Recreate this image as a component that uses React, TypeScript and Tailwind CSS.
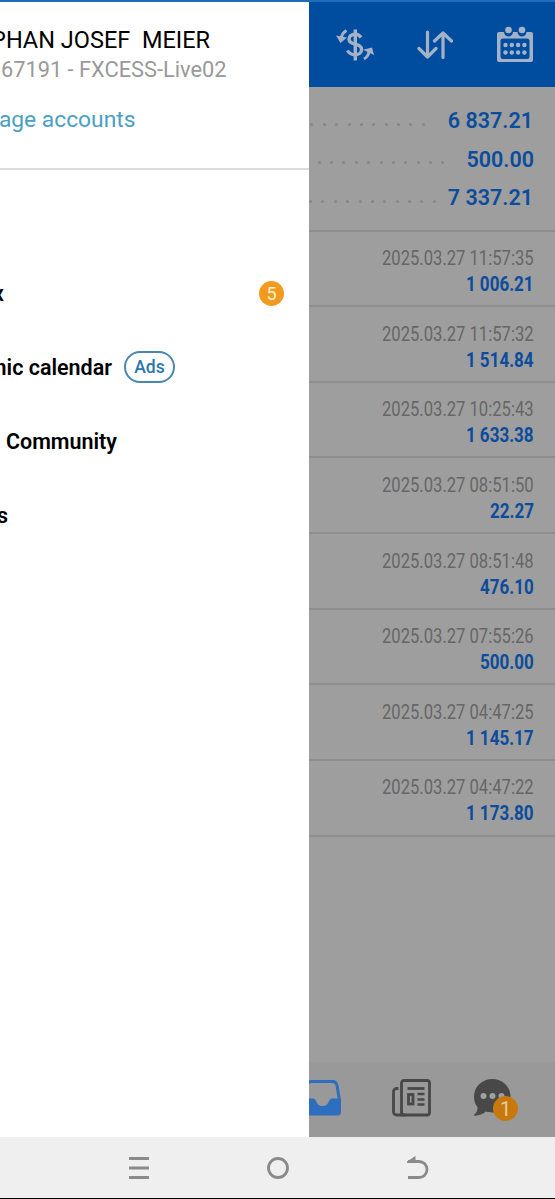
import clsx from "clsx";

const summary = [
  { value: "6 837.21", dots: 10, gap: "mr-[23px]", nudge: "mr-px" },
  { value: "500.00", dots: 11, gap: "mr-[22px]", nudge: "" },
  { value: "7 337.21", dots: 11, gap: "mr-[12px]", nudge: "mr-px" },
];

const history = [
  { time: "2025.03.27 11:57:35", amount: "1 006.21" },
  { time: "2025.03.27 11:57:32", amount: "1 514.84" },
  { time: "2025.03.27 10:25:43", amount: "1 633.38" },
  { time: "2025.03.27 08:51:50", amount: "22.27" },
  { time: "2025.03.27 08:51:48", amount: "476.10" },
  { time: "2025.03.27 07:55:26", amount: "500.00" },
  { time: "2025.03.27 04:47:25", amount: "1 145.17" },
  { time: "2025.03.27 04:47:22", amount: "1 173.80" },
];

function CurrencyIcon() {
  return (
    <svg width="38" height="34" viewBox="0 0 38 34" fill="none" stroke="#a3b2c6" strokeWidth="3.400">
      <path d="M25 9.500C23.500 7.300 22 6.300 19.300 6.300c-4 0-6.300 2-6.300 4.900 0 6.800 12.600 3.200 12.600 10.300 0 3.200-2.600 5.200-6.300 5.200-3.600 0-6.300-1.400-7.900-4.200" />
      <path d="M19.300 1.500v31" />
      <path d="M10.500 2.500C7 4.500 5.300 7.500 5.200 11" strokeWidth="3" />
      <path d="M0 7.500 4.500 15 11 9.500z" fill="#a3b2c6" stroke="none" />
      <path d="M28 31c3.400-2 4.800-4.200 5-8" strokeWidth="3" />
      <path d="M27 21.800 38 27 36 19.500z" fill="#a3b2c6" stroke="none" />
    </svg>
  );
}

function SortIcon() {
  return (
    <svg width="36" height="30" viewBox="0 0 36 30" fill="none" stroke="#a3b2c6" strokeWidth="3.200" strokeLinecap="round" strokeLinejoin="round">
      <path d="M10.500 2v25M2 18.500l8.500 8.500 8.500-8.500" />
      <path d="M26 27.500V3M17.500 11l8.500-8 8.500 8" />
    </svg>
  );
}

function CalendarIcon() {
  return (
    <svg width="36" height="37" viewBox="0 0 36 37" fill="#a3b2c6">
      <path
        fillRule="evenodd"
        d="M2 6h5a4.500 4.500 0 0 0 9 0h4.500a4.500 4.500 0 0 0 9 0H34a2 2 0 0 1 2 2v26a2 2 0 0 1-2 2H2a2 2 0 0 1-2-2V8a2 2 0 0 1 2-2zM6 12.500a2.500 2.500 0 0 0-2.500 2.500v15.500a2.500 2.500 0 0 0 2.500 2.500h24a2.500 2.500 0 0 0 2.500-2.500V15a2.500 2.500 0 0 0-2.500-2.500z"
      />
      <circle cx="11.500" cy="4" r="3.300" />
      <circle cx="25" cy="4" r="3.300" />
      {[8.5, 14.8, 21.1, 27.4].map((x) => (
        <g key={x}>
          <circle cx={x} cy="19" r="2.200" />
          <circle cx={x} cy="26.500" r="2.200" />
        </g>
      ))}
    </svg>
  );
}

function InboxIcon() {
  return (
    <svg width="38" height="36" viewBox="0 0 38 36" fill="none">
      <path
        d="M1.700 19 4 5.500a5 5 0 0 1 5-4h20a5 5 0 0 1 5 4L36.300 19"
        stroke="#2d6fbe"
        strokeWidth="3"
      />
      <path
        d="M0 18.500h10.500q2 0 2.500 2.500c.8 3 3 5 6.500 5s5.700-2 6.500-5q.5-2.500 2.500-2.500H38V32a3.500 3.500 0 0 1-3.500 3.500h-31A3.500 3.500 0 0 1 0 32z"
        fill="#2d6fbe"
      />
    </svg>
  );
}

function NewsIcon() {
  return (
    <svg width="39" height="38" viewBox="0 0 39 38" fill="none" stroke="#484848" strokeWidth="2.800">
      <rect x="9.500" y="1.500" width="28" height="34.500" rx="2.500" />
      <path d="M6.500 9.500H4.500a3 3 0 0 0-3 3V33a3 3 0 0 0 3 3H13" />
      <path d="M15.500 9.500h17" />
      <rect x="16.500" y="15.500" width="4.500" height="9.500" />
      <path d="M25.500 15h7M25.500 20.500h7M25.500 25.500h7" strokeWidth="2.400" />
    </svg>
  );
}

function ChatIcon() {
  return (
    <svg width="40" height="38" viewBox="0 0 40 38">
      <path
        d="M19.500 0C29.500 0 37.500 7.500 37.500 17.500S29.500 33.500 19.500 33.500c-2.500 0-4.500-.3-6.500-.9C9.500 35.500 5 37 .5 36.600c2.700-2.200 4-5 4.200-8.100C2 25.500 1 21.500 1 17.500 1 7.500 9.500 0 19.500 0z"
        fill="#484848"
      />
      <g fill="#a0a0a0">
        <circle cx="10.500" cy="17" r="3" />
        <circle cx="19.500" cy="17" r="3" />
        <circle cx="28.500" cy="17" r="3" />
      </g>
    </svg>
  );
}

function Drawer() {
  return (
    <aside className="w-[309px] shrink-0 overflow-hidden bg-white pt-[24px]">
      <div className="flex h-[142px] flex-col whitespace-pre">
        <div className="flex w-[210px] justify-end text-[23.500px] leading-[29px] text-black">
          PHAN JOSEF  MEIER
        </div>
        <div className="flex w-[226.500px] justify-end text-[21.800px] leading-[30px] text-[#999]">
          67191 - FXCESS-Live02
        </div>
        <div className="mt-[20px] flex w-[135.500px] justify-end text-[22.800px] leading-[30px] text-[#4a9fc4]">
          age accounts
        </div>
      </div>
      <div className="h-[2px] bg-[#dcdcdc]" />

      {/* MENU */}
      <nav className="mt-[87px] flex flex-col text-[21.500px] font-semibold text-black">
        <div className="flex h-[74px] items-center justify-between pr-[25px]">
          <span className="flex w-[4px] justify-end">x</span>
          <span className="-mt-[2px] flex size-[25px] items-center justify-center rounded-full bg-[#f29a1f] text-[18px] font-normal text-[#fff3d0]">
            5
          </span>
        </div>
        <div className="flex h-[74px] items-center">
          <span className="flex w-[112px] justify-end whitespace-nowrap">nic calendar</span>
          <span className="ml-[12px] -mt-[2px] flex h-[32px] w-[51px] items-center justify-center rounded-full border-2 border-[#4a86b2] text-[17.500px] font-medium text-[#2b76ad]">
            Ads
          </span>
        </div>
        <div className="flex h-[74px] items-center">
          <span className="flex w-[117px] justify-end">Community</span>
        </div>
        <div className="flex h-[75px] items-center">
          <span className="flex w-[8px] justify-end">s</span>
        </div>
      </nav>
    </aside>
  );
}

function History() {
  return (
    <main className="flex min-w-0 flex-1 flex-col overflow-hidden bg-[#9e9e9e]">
      <header className="flex h-[85px] shrink-0 items-center bg-[#004c9f] pl-[27px]">
        <CurrencyIcon />
        <div className="ml-[43px]">
          <SortIcon />
        </div>
        <div className="ml-[44px]">
          <CalendarIcon />
        </div>
      </header>

      <section className="h-[144.500px] shrink-0 border-b-2 border-[#8e8e8e] pt-[15px] pr-[21px]">
        {summary.map((row) => (
          <div key={row.value} className="flex h-[38.500px] items-center justify-end">
            <div className={clsx("mt-[6px] flex shrink-0 gap-[9.400px]", row.gap)}>
              {Array.from({ length: row.dots }, (_, i) => (
                <span key={i} className="size-[3px] shrink-0 rounded-full bg-[#858585]" />
              ))}
            </div>
            <span className={clsx("shrink-0 text-[21.500px] font-semibold text-[#0b4c9c]", row.nudge)}>
              {row.value}
            </span>
          </div>
        ))}
      </section>

      <section className="flex flex-col">
        {history.map((deal) => (
          <div
            key={deal.time}
            className="flex h-[75.650px] flex-col items-end border-b-2 border-[#8e8e8e] pt-[13.500px] pr-[21px]"
          >
            <span className="origin-right scale-x-[0.83] text-[20px] leading-[26px] whitespace-nowrap text-[#666]">
              {deal.time}
            </span>
            <span className="origin-right scale-x-[0.83] text-[20.500px] leading-[26px] font-bold whitespace-nowrap text-[#0b4c9c]">
              {deal.amount}
            </span>
          </div>
        ))}
      </section>

      {/* TAB BAR */}
      <footer className="mt-auto flex h-[75px] shrink-0 items-center bg-[#999] pb-[3px]">
        <div className="-ml-[6px] shrink-0">
          <InboxIcon />
        </div>
        <div className="ml-[51px] shrink-0">
          <NewsIcon />
        </div>
        <div className="relative ml-[42px] shrink-0">
          <ChatIcon />
          <span className="absolute top-[17px] left-[20px] flex size-[25px] items-center justify-center rounded-full bg-[#c9790c] text-[20px] text-[#e0cda8]">
            1
          </span>
        </div>
      </footer>
    </main>
  );
}

export default function App() {
  return (
    <div className="flex h-[1199px] w-[555px] flex-col overflow-hidden bg-[#efefef] font-['Roboto',sans-serif]">
      <div className="h-[2px] shrink-0 bg-[#1c6dbb]" />
      <div className="flex h-[1135px] shrink-0">
        <Drawer />
        <History />
      </div>

      {/* SYSTEM NAVIGATION */}
      <div className="flex flex-1 items-center border-b border-black pl-[129px] text-[#8a8a8a]">
        <svg width="20" height="24" viewBox="0 0 20 24" stroke="currentColor" strokeWidth="3">
          <path d="M0 2.500h20M0 12h20M0 21.500h20" />
        </svg>
        <svg className="ml-[118px]" width="22" height="22" viewBox="0 0 22 22" fill="none" stroke="currentColor" strokeWidth="2.800">
          <circle cx="11" cy="11" r="9.500" />
        </svg>
        <svg className="ml-[118px]" width="22" height="24" viewBox="0 0 22 24" fill="none" stroke="currentColor" strokeWidth="2.800">
          <path d="M1 5.500h11a7.500 7.500 0 0 1 0 16H1" />
          <path d="M0 6.900V5.500L8.500 0v6.900z" fill="currentColor" stroke="none" />
        </svg>
      </div>
    </div>
  );
}
